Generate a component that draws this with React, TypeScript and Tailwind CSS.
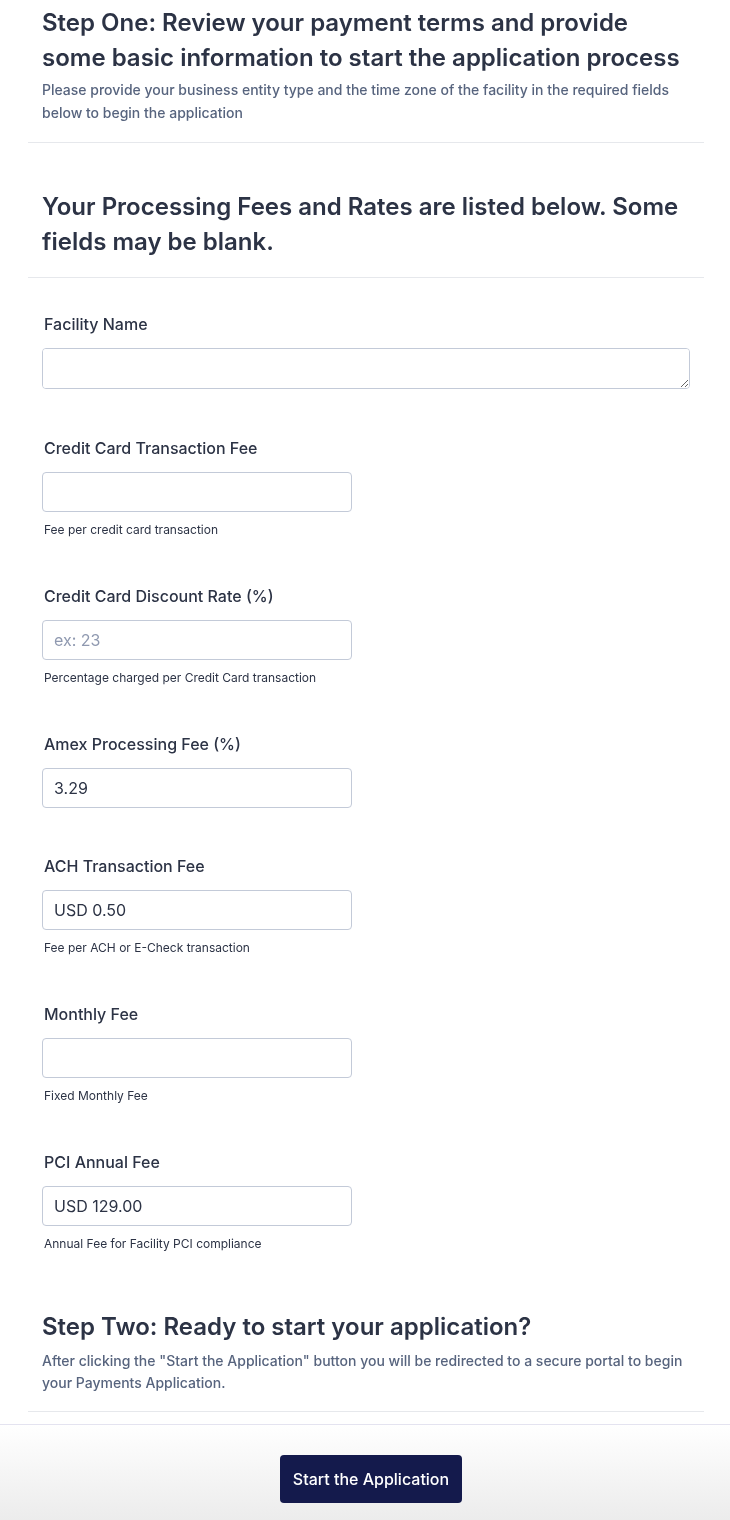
const FONT = "font-['Inter','Noto_Sans',sans-serif]";

type Field = {
    label: string;
    value?: string;
    placeholder?: string;
    sub?: string;
};

const FIELDS: Field[] = [
    { label: "Credit Card Transaction Fee", sub: "Fee per credit card transaction" },
    { label: "Credit Card Discount Rate (%)", placeholder: "ex: 23", sub: "Percentage charged per Credit Card transaction" },
    { label: "Amex Processing Fee (%)", value: "3.29" },
    { label: "ACH Transaction Fee", value: "USD 0.50", sub: "Fee per ACH or E-Check transaction" },
    { label: "Monthly Fee", sub: "Fixed Monthly Fee" },
    { label: "PCI Annual Fee", value: "USD 129.00", sub: "Annual Fee for Facility PCI compliance" },
];

const FieldBlock = ({ field }: { field: Field }) => {
    return (
        <div className="mb-[48px]">
            <label className="block pl-[2px] h-[20px] leading-[20px] text-[16px] font-medium text-[#2c3345]">
                {field.label}
            </label>
            <input
                type="text"
                defaultValue={field.value ?? ""}
                placeholder={field.placeholder}
                className="mt-[14px] block w-[310px] h-[40px] px-[11px] text-[16px] text-[#2c3345] placeholder:text-[#8f99b0] bg-white border border-[#c3cad8] rounded-[4px] outline-none"
            />
            {field.sub && (
                <p className="mt-[10px] pl-[2px] h-[16px] leading-[16px] text-[12px] text-[#2c3345]">
                    {field.sub}
                </p>
            )}
        </div>
    );
};

const App = () => {
    return (
        <div className={`${FONT} w-[730px] min-h-[1520px] bg-white`}>
            <div className="ml-[28px] w-[676px]">
                {/* step one */}
                <div className="px-[14px] pt-[5px] pb-[18px] border-b border-[#e6e8ec]">
                    <h1 className="text-[24px] leading-[35px] font-semibold text-[#2c3345]">
                        Step One: Review your payment terms and provide some basic information to start the application process
                    </h1>
                    <p className="mt-[3px] text-[14px] leading-[23px] font-medium text-[#57647e]">
                        Please provide your business entity type and the time zone of the facility in the required fields below to begin the application
                    </p>
                </div>

                <div className="px-[14px] pt-[46px] pb-[18px] border-b border-[#e6e8ec]">
                    <h2 className="text-[24px] leading-[35px] font-semibold text-[#2c3345]">
                        Your Processing Fees and Rates are listed below. Some fields may be blank.
                    </h2>
                </div>

                {/* fields */}
                <div className="px-[14px] pt-[36px]">
                    <div className="mb-[49px]">
                        <label className="block pl-[2px] h-[20px] leading-[20px] text-[16px] font-medium text-[#2c3345]">
                            Facility Name
                        </label>
                        <textarea
                            className="mt-[14px] block w-[648px] h-[41px] px-[11px] py-[8px] text-[16px] text-[#2c3345] bg-white border border-[#c3cad8] rounded-[4px] outline-none"
                        />
                    </div>
                    {FIELDS.map((field) => (
                        <FieldBlock key={field.label} field={field} />
                    ))}
                </div>

                {/* step two */}
                <div className="px-[14px] pt-[9px] pb-[17px] border-b border-[#e6e8ec]">
                    <h2 className="text-[24px] leading-[35px] font-semibold text-[#2c3345]">
                        Step Two: Ready to start your application?
                    </h2>
                    <p className="mt-[6px] text-[14px] leading-[22px] font-medium text-[#57647e]">
                        After clicking the "Start the Application" button you will be redirected to a secure portal to begin your Payments Application.
                    </p>
                </div>
            </div>

            <div className="mt-[12px] border-t border-[#e4e3f0] h-[96px] bg-gradient-to-b from-white to-[#ececec] flex justify-center pt-[30px] pl-[12px]">
                <button className="w-[182px] h-[48px] rounded-[4px] bg-[#141a4c] text-white text-[16px] font-medium">
                    Start the Application
                </button>
            </div>
        </div>
    );
};

export default App;
